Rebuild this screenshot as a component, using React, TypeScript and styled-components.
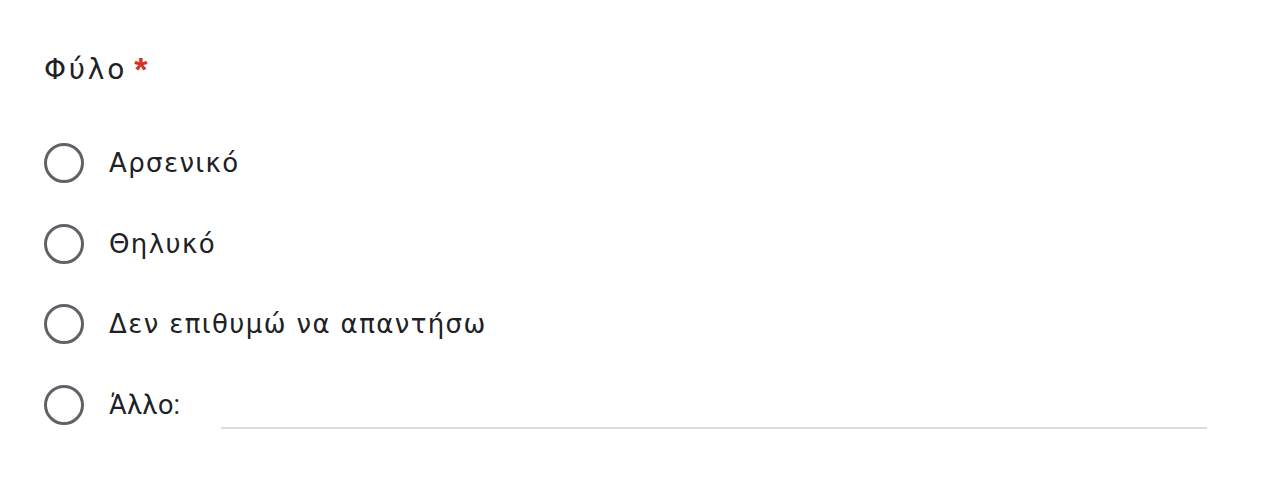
import React from 'react';
import styled, { createGlobalStyle } from 'styled-components';

const GlobalStyle = createGlobalStyle`
  html, body {
    margin: 0;
    padding: 0;
    background: #fff;
  }
  body {
    font-family: 'DejaVu Sans', 'Noto Sans', sans-serif;
    color: #202124;
  }
`;

const Card = styled.div`
  width: 1266px;
  height: 494px;
  box-sizing: border-box;
  padding: 54px 59px 0 44px;
  background: #fff;
  border-radius: 8px;
`;

const Title = styled.div`
  font-size: 28px;
  line-height: 32px;
  height: 32px;
  display: flex;
  align-items: center;
  gap: 7px;
  letter-spacing: 2.8px;
`;

const Required = styled.span`
  color: #d93025;
  font-family: 'Liberation Sans', sans-serif;
  font-size: 34px;
  font-weight: 700;
  line-height: 32px;
  letter-spacing: 0;
  margin-top: -2px;
`;

const Options = styled.div`
  margin-top: 57px;
  display: flex;
  flex-direction: column;
  gap: 40.7px;
`;

const Row = styled.label`
  display: flex;
  align-items: center;
  height: 40px;
  gap: 25px;
  cursor: pointer;
`;

const Radio = styled.span`
  flex: none;
  width: 40px;
  height: 40px;
  box-sizing: border-box;
  border: 3px solid #5f6368;
  border-radius: 50%;
`;

const Label = styled.span<{ $plain?: boolean }>`
  font-family: ${(p) => (p.$plain ? "Roboto, 'Noto Sans', sans-serif" : "'DejaVu Sans', 'Noto Sans', sans-serif")};
  font-size: ${(p) => (p.$plain ? '27px' : '26px')};
  letter-spacing: ${(p) => (p.$plain ? '0.3px' : '1.4px')};
  line-height: 40px;
  color: #202124;
  white-space: nowrap;
`;

const OtherInput = styled.input`
  flex: 1;
  align-self: flex-end;
  margin: 0 0 -4px 16px;
  height: 30px;
  border: none;
  border-bottom: 2px solid #dadce0;
  outline: none;
  background: transparent;
  font-size: 20px;
  padding: 0;
`;

const options = ['Αρσενικό', 'Θηλυκό', 'Δεν επιθυμώ να απαντήσω'];

export default function App() {
  return (
    <>
      <GlobalStyle />
      <Card>
        <Title>
          Φύλο<Required>*</Required>
        </Title>
        <Options>
          {options.map((o) => (
            <Row key={o}>
              <Radio />
              <Label>{o}</Label>
            </Row>
          ))}
          <Row>
            <Radio />
            <Label $plain>Άλλο:</Label>
            <OtherInput aria-label="Άλλο" />
          </Row>
        </Options>
      </Card>
    </>
  );
}
